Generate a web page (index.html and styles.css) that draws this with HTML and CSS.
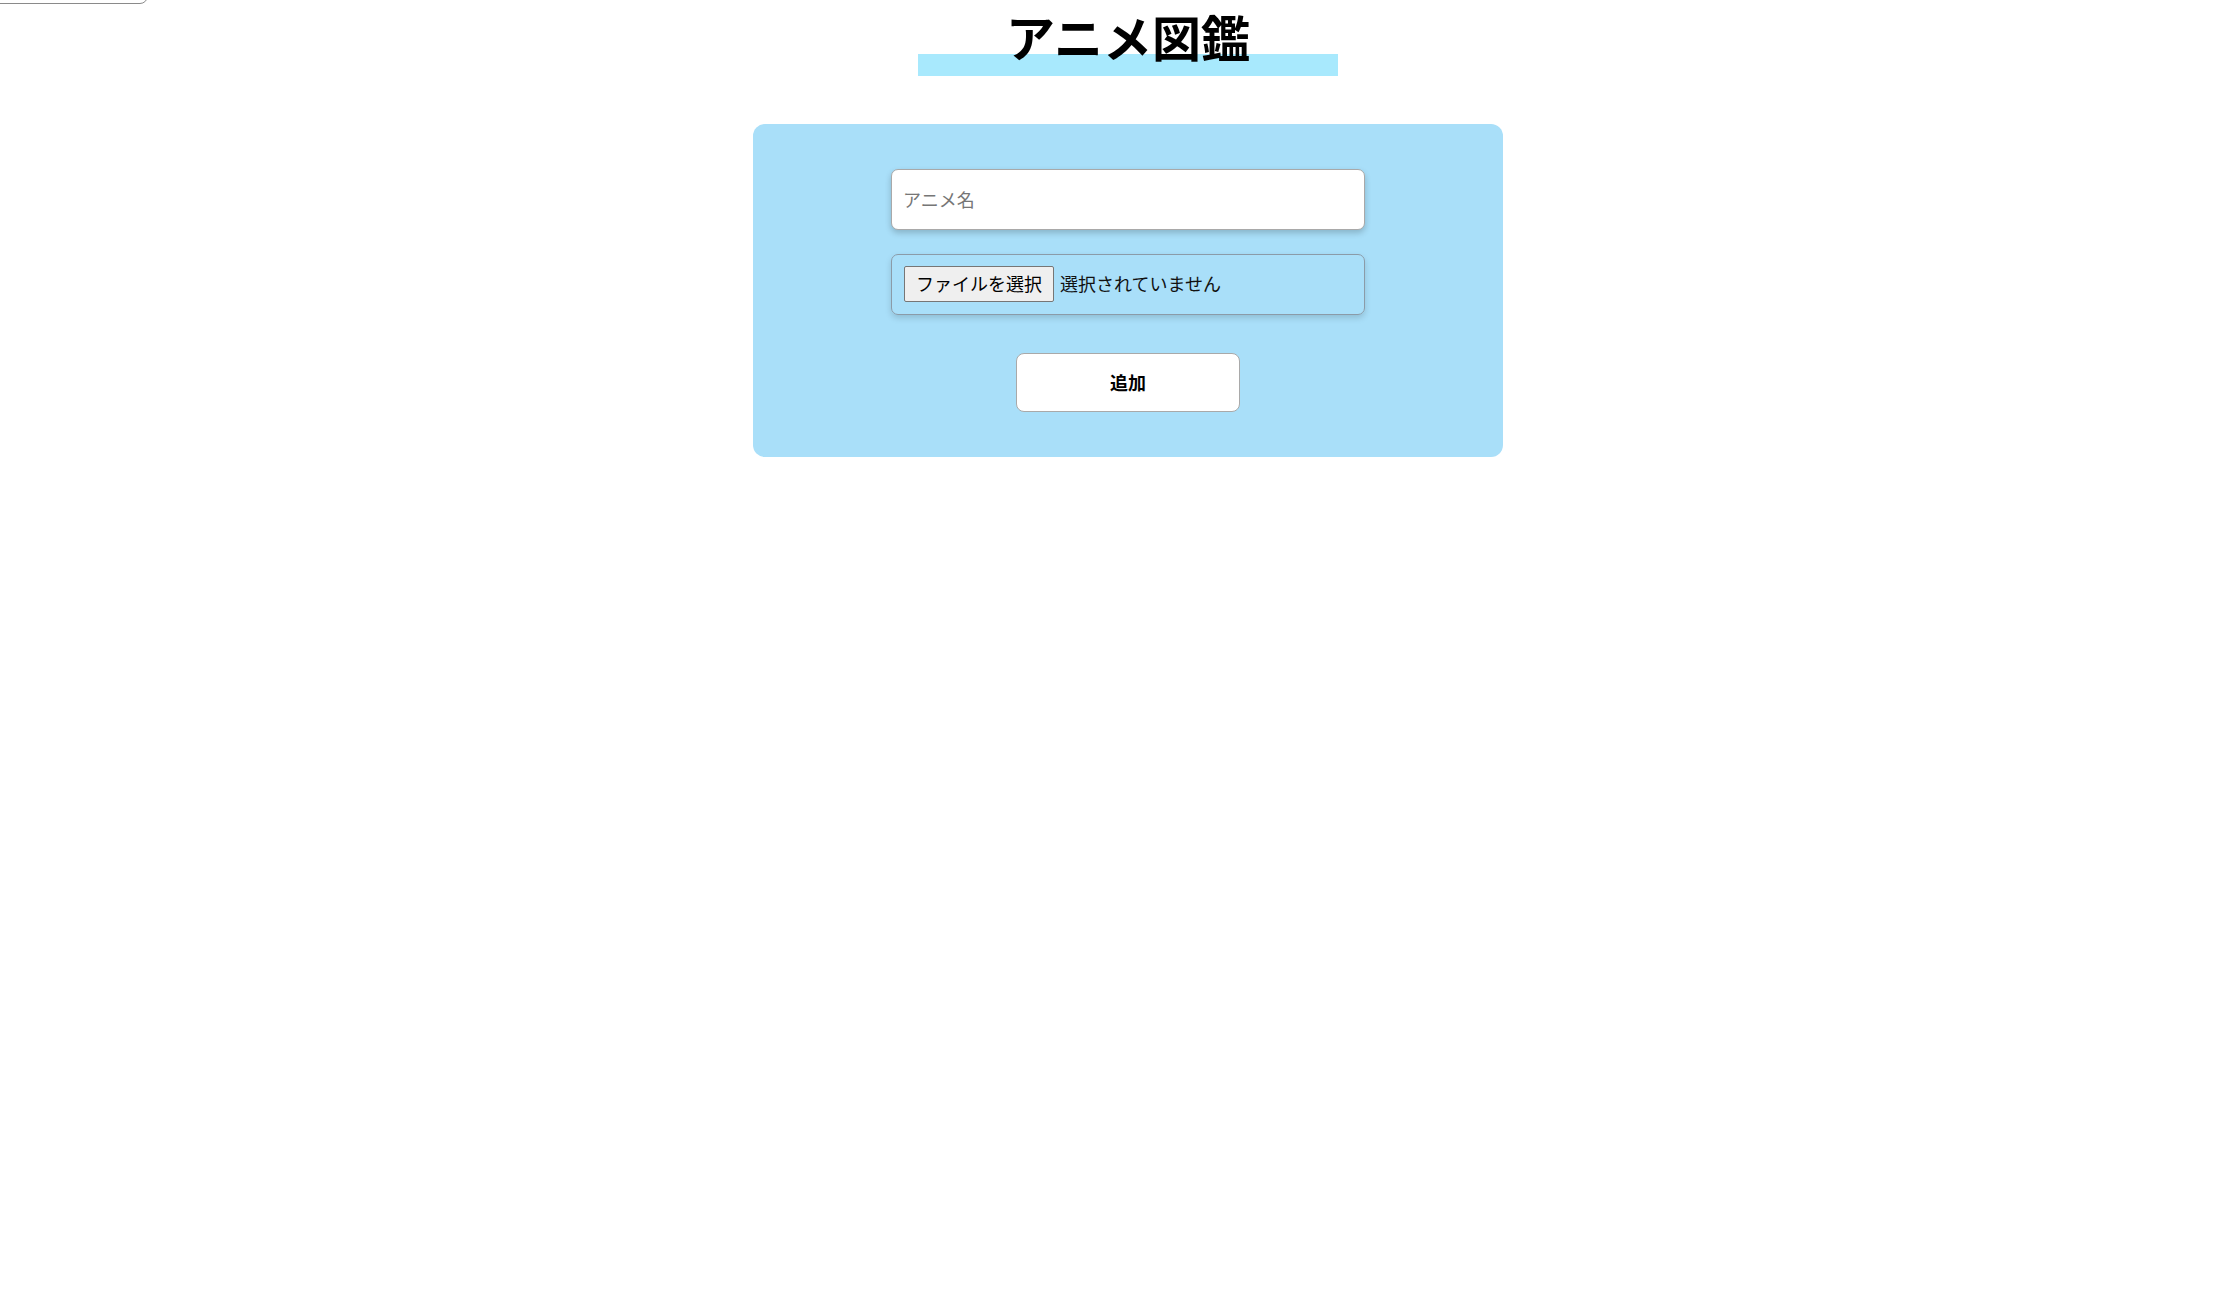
FILE: index.html
```html
<!DOCTYPE html>
<html lang="ja">
<head>
<meta charset="utf-8">
<title>アニメ図鑑</title>
<link rel="stylesheet" href="styles.css">
</head>
<body>
<div class="corner"></div>
<main class="page">
  <h1 class="title">アニメ図鑑</h1>
  <form class="card">
    <input class="name-input" type="text" placeholder="アニメ名">
    <div class="file-box">
      <span class="file-btn">ファイルを選択</span>
      <span class="file-text">選択されていません</span>
    </div>
    <button class="add-btn" type="button">追加</button>
  </form>
</main>
</body>
</html>
```
FILE: styles.css
```css
html, body {
  margin: 0;
  padding: 0;
  background: #ffffff;
}
body {
  font-family: "Noto Sans CJK JP", "Noto Sans", sans-serif;
  color: #000;
  position: relative;
  min-height: 1303px;
}
.corner {
  position: absolute;
  top: -40px;
  left: -10px;
  width: 156px;
  height: 42px;
  border: 1px solid #8a8a8a;
  border-radius: 8px;
}
.page {
  padding-left: 31px;
  display: flex;
  flex-direction: column;
  align-items: center;
}
.title {
  box-sizing: border-box;
  width: 420px;
  height: 76px;
  margin: 0;
  padding-top: 11px;
  font-size: 49px;
  line-height: 49px;
  font-weight: 700;
  text-align: center;
  background: linear-gradient(to bottom, transparent 54px, #a8e9fd 54px);
}
.card {
  box-sizing: border-box;
  width: 750px;
  margin-top: 48px;
  padding: 45px 0;
  border-radius: 12px;
  background: #a9dff9;
  display: flex;
  flex-direction: column;
  align-items: center;
}
.name-input {
  box-sizing: border-box;
  width: 474px;
  height: 61px;
  margin: 0;
  padding: 0 11px 2px;
  border: 1px solid #a9a9a9;
  border-radius: 7px;
  background: #fff;
  box-shadow: 0 3px 6px rgba(0, 0, 0, 0.2);
  font-family: "Noto Sans CJK JP", sans-serif;
  font-size: 18px;
  outline: none;
}
.name-input::placeholder {
  color: #767676;
}
.file-box {
  box-sizing: border-box;
  width: 474px;
  height: 61px;
  margin-top: 24px;
  padding-left: 12px;
  padding-bottom: 2px;
  border: 1px solid #8b9ba8;
  border-radius: 7px;
  box-shadow: 0 3px 6px rgba(0, 0, 0, 0.15);
  display: flex;
  align-items: center;
  gap: 6px;
  font-size: 18px;
}
.file-btn {
  box-sizing: border-box;
  height: 36px;
  padding: 0 11px 2px;
  border: 1px solid #767676;
  border-radius: 2px;
  background: #efefef;
  display: flex;
  align-items: center;
  color: #000;
}
.file-text {
  color: #111;
  padding-bottom: 2px;
}
.add-btn {
  box-sizing: border-box;
  width: 224px;
  height: 59px;
  margin-top: 38px;
  padding: 0 0 2px;
  border: 1px solid #a9a9a9;
  border-radius: 8px;
  background: #fff;
  font-family: "Noto Sans CJK JP", sans-serif;
  font-size: 18px;
  font-weight: 700;
  color: #000;
}
```
